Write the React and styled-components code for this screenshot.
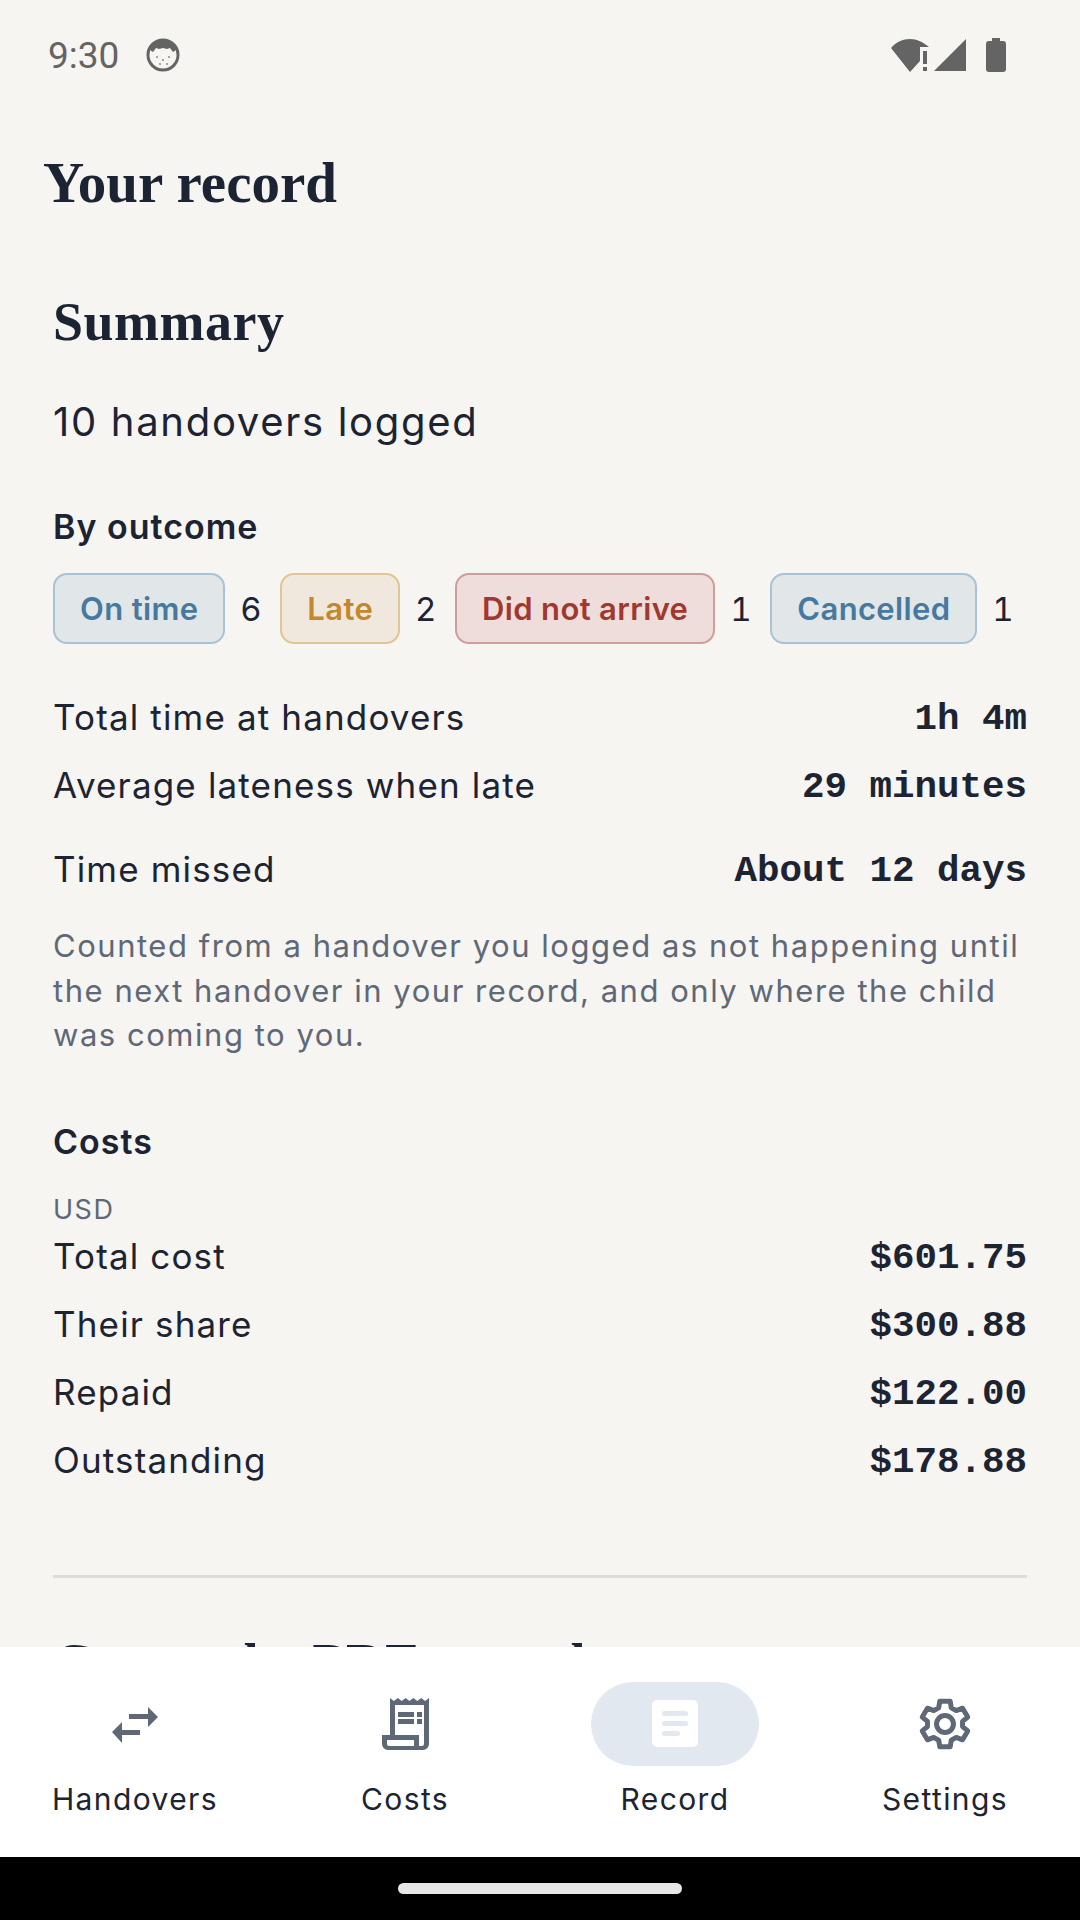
import React from 'react';
import styled, { createGlobalStyle } from 'styled-components';

const GlobalStyle = createGlobalStyle`
  html, body {
    margin: 0;
    padding: 0;
    background: #f6f5f1;
  }
`;

const sans = `"Inter", "Noto Sans", sans-serif`;
const serif = `"Liberation Serif", serif`;
const mono = `"Liberation Mono", monospace`;

const Screen = styled.div`
  width: 1080px;
  height: 1920px;
  display: flex;
  flex-direction: column;
  overflow: hidden;
  background: #f6f5f1;
  color: #1c2433;
  font-family: ${sans};
`;

const StatusBar = styled.div`
  height: 110px;
  flex: none;
  display: flex;
  align-items: center;
  justify-content: space-between;
  padding: 0 74px 0 48px;
  box-sizing: border-box;
  color: #646464;
`;

const StatusLeft = styled.div`
  display: flex;
  align-items: center;
  gap: 27px;
  font-family: Roboto, sans-serif;
  font-size: 37px;
`;

const StatusRight = styled.div`
  display: flex;
  align-items: center;
  gap: 5px;
`;

const BatterySlot = styled.div`
  display: flex;
  margin-left: 14px;
`;

const Content = styled.div`
  flex: 1;
  min-height: 0;
  overflow: hidden;
  padding: 40px 53px 0;
`;

const Title = styled.h1`
  margin: 0 0 0 -10px;
  font-family: ${serif};
  font-size: 57px;
  line-height: 66px;
  font-weight: 700;
`;

const Heading = styled.h2`
  margin: ${p => p.$top}px 0 0;
  font-family: ${serif};
  font-size: 54px;
  line-height: 62px;
  font-weight: 700;
  letter-spacing: 0.5px;
  white-space: nowrap;
`;

const Lead = styled.p`
  margin: 45px 0 0;
  font-size: 40px;
  line-height: 48px;
  letter-spacing: 1.7px;
`;

const SubHeading = styled.h3`
  margin: ${p => p.$top}px 0 0;
  font-size: 34px;
  line-height: 42px;
  font-weight: 600;
  letter-spacing: 1px;
`;

const Outcomes = styled.div`
  display: flex;
  align-items: center;
  margin-top: 25px;
  gap: 20px;
`;

const Outcome = styled.div`
  display: flex;
  align-items: center;
  gap: 15px;
`;

const Chip = styled.span`
  display: flex;
  align-items: center;
  height: 71px;
  box-sizing: border-box;
  padding: 0 25px;
  border-radius: 14px;
  border: 2px solid ${p => p.$border};
  background: ${p => p.$bg};
  color: ${p => p.$color};
  font-size: 31px;
  font-weight: 600;
  letter-spacing: 0.35px;
  white-space: nowrap;
`;

const Count = styled.span`
  width: 20px;
  font-size: 33px;
  font-variant-numeric: tabular-nums;
`;

const Rows = styled.div`
  margin-top: ${p => p.$top}px;
  display: flex;
  flex-direction: column;
`;

const Row = styled.div`
  display: flex;
  justify-content: space-between;
  align-items: center;
  height: ${p => p.$h || 68}px;
  font-size: 35px;
  letter-spacing: 1.15px;
`;

const Value = styled.span`
  padding-top: 4px;
  font-family: ${mono};
  font-weight: 700;
  font-size: 37.5px;
  letter-spacing: 0;
`;

const Note = styled.p`
  margin: 5px 0 0;
  font-size: 31px;
  line-height: 44.5px;
  letter-spacing: 1.53px;
  color: #5f6877;
`;

const Currency = styled.div`
  margin-top: 35px;
  font-size: 27px;
  line-height: 24px;
  letter-spacing: 1.5px;
  color: #5f6877;
`;

const Divider = styled.hr`
  margin: 81px 0 0;
  border: none;
  height: 3px;
  background: #dddcd5;
`;

const NavBar = styled.nav`
  flex: none;
  height: 210px;
  background: #fff;
  display: grid;
  grid-template-columns: repeat(4, 270px);
`;

const NavItem = styled.div`
  display: flex;
  flex-direction: column;
  align-items: center;
  padding-top: 35px;
`;

const IconPill = styled.div`
  width: 168px;
  height: 84px;
  border-radius: 42px;
  display: flex;
  align-items: center;
  justify-content: center;
  background: ${p => (p.$active ? '#e2e8ef' : 'transparent')};
`;

const NavLabel = styled.span`
  margin-top: 14px;
  font-size: 30px;
  line-height: 38px;
  letter-spacing: 1.4px;
`;

const GestureBar = styled.div`
  flex: none;
  height: 63px;
  background: #000;
  display: flex;
  align-items: center;
  justify-content: center;
`;

const HomePill = styled.div`
  width: 284px;
  height: 11px;
  border-radius: 6px;
  background: #e8e8e8;
`;

const FaceIcon = () => (
  <svg width="34" height="34" viewBox="0 0 34 34">
    <circle cx="17" cy="17" r="15" fill="#f6f5f1" stroke="#646464" strokeWidth="3" />
    <path d="M4 12C6 5 11 2 17 2s11 3 13 10l-3 2-3-4-3 1-4-1-4 1-3-1-3 4z" fill="#646464" />
    <g fill="#8a8a8a">
      <circle cx="11" cy="19" r="1" /><circle cx="17" cy="22" r="1" /><circle cx="23" cy="19" r="1" />
      <circle cx="14" cy="26" r="1" /><circle cx="21" cy="26" r="1" />
    </g>
  </svg>
);

const WifiIcon = () => (
  <svg width="38" height="34" viewBox="0 0 38 34">
    <path d="M0 10C5 4 12 1 19 1s13 3 19 8h-9v14l-10 11z" fill="#646464" />
    <rect x="32" y="13" width="4" height="13" fill="#646464" />
    <rect x="32" y="29" width="4" height="4" fill="#646464" />
  </svg>
);

const SignalIcon = () => (
  <svg width="33" height="34" viewBox="0 0 33 34">
    <path d="M0 33L32 1v32z" fill="#646464" />
  </svg>
);

const BatteryIcon = () => (
  <svg width="20" height="34" viewBox="0 0 20 34">
    <path d="M6 0h8v3h3a3 3 0 0 1 3 3v25a3 3 0 0 1-3 3H3a3 3 0 0 1-3-3V6a3 3 0 0 1 3-3h3z" fill="#646464" />
  </svg>
);

const SwapIcon = () => (
  <svg width="48" height="48" viewBox="0 0 48 48" fill="#5f6877">
    <path d="M18 14h19V7l10 10-10 10v-8H18z" />
    <path d="M1 32l10-10v8h18v5H11v8z" />
  </svg>
);

const ReceiptIcon = () => (
  <svg width="47" height="52" viewBox="0 0 47 52" fill="#5f6877" fillRule="evenodd">
    <path d="M8 0l3.9 3 3.9-3 3.9 3 3.9-3 3.9 3 3.9-3 3.9 3 3.9-3 3.9 3 3.9-3v46a6 6 0 0 1-6 6H6a6 6 0 0 1-6-6V37h8zM13 7v30h24v11h3a2 2 0 0 0 2-2V7z" />
    <path d="M5 42h27v6H7a2 2 0 0 1-2-2z" fill="#fff" />
    <path d="M16 14h16v5H16zM35 14h5v5h-5zM16 21h16v5H16zM35 21h5v5h-5z" />
  </svg>
);

const RecordIcon = () => (
  <svg width="48" height="48" viewBox="0 0 48 48">
    <rect x="1" y="0" width="46" height="47" rx="5" fill="#fff" />
    <rect x="11" y="11" width="26" height="5" rx="2.5" fill="#e2e8ef" />
    <rect x="11" y="21" width="26" height="5" rx="2.5" fill="#e2e8ef" />
    <rect x="11" y="31" width="18" height="5" rx="2.5" fill="#e2e8ef" />
  </svg>
);

const GearIcon = () => (
  <svg width="52" height="54" viewBox="0 0 24 24" fill="none" stroke="#5f6877" strokeWidth="2.3" strokeLinejoin="round">
    <path d="M9.6 1.5h4.8l.5 3 2.3 1.3 2.9-1.1 2.4 4.1-2.4 2v2.4l2.4 2-2.4 4.1-2.9-1.1-2.3 1.3-.5 3H9.6l-.5-3-2.3-1.3-2.9 1.1-2.4-4.1 2.4-2v-2.4l-2.4-2 2.4-4.1 2.9 1.1 2.3-1.3z" />
    <circle cx="12" cy="12" r="3.9" />
  </svg>
);

const outcomes = [
  { label: 'On time', count: 6, color: '#47799f', bg: '#e1e6e9', border: '#a9c2d4' },
  { label: 'Late', count: 2, color: '#c4872b', bg: '#f0e8dc', border: '#e0c595' },
  { label: 'Did not arrive', count: 1, color: '#a23730', bg: '#eeddda', border: '#cf9e9a' },
  { label: 'Cancelled', count: 1, color: '#47799f', bg: '#e1e6e9', border: '#a9c2d4' },
];

const costs = [
  ['Total cost', '$601.75'],
  ['Their share', '$300.88'],
  ['Repaid', '$122.00'],
  ['Outstanding', '$178.88'],
];

const tabs = [
  { label: 'Handovers', icon: <SwapIcon /> },
  { label: 'Costs', icon: <ReceiptIcon /> },
  { label: 'Record', icon: <RecordIcon />, active: true },
  { label: 'Settings', icon: <GearIcon /> },
];

export default function App() {
  return (
    <Screen>
      <GlobalStyle />
      <StatusBar>
        <StatusLeft>
          <span>9:30</span>
          <FaceIcon />
        </StatusLeft>
        <StatusRight>
          <WifiIcon />
          <SignalIcon />
          <BatterySlot>
            <BatteryIcon />
          </BatterySlot>
        </StatusRight>
      </StatusBar>
      <Content>
        <Title>Your record</Title>
        <Heading $top={75}>Summary</Heading>
        <Lead>10 handovers logged</Lead>
        <SubHeading $top={60}>By outcome</SubHeading>
        <Outcomes>
          {outcomes.map(o => (
            <Outcome key={o.label}>
              <Chip $color={o.color} $bg={o.bg} $border={o.border}>{o.label}</Chip>
              <Count>{o.count}</Count>
            </Outcome>
          ))}
        </Outcomes>
        <Rows $top={39}>
          <Row><span>Total time at handovers</span><Value>1h 4m</Value></Row>
          <Row><span>Average lateness when late</span><Value>29 minutes</Value></Row>
          <Row $h={100}><span>Time missed</span><Value>About 12 days</Value></Row>
        </Rows>
        <Note>
          Counted from a handover you logged as not happening until the next handover in your record, and only where the child was coming to you.
        </Note>
        <SubHeading $top={63}>Costs</SubHeading>
        <Currency>USD</Currency>
        <Rows $top={0}>
          {costs.map(([label, value]) => (
            <Row key={label}><span>{label}</span><Value>{value}</Value></Row>
          ))}
        </Rows>
        <Divider />
        <Heading $top={54}>Create the PDF record</Heading>
      </Content>
      <NavBar>
        {tabs.map(t => (
          <NavItem key={t.label}>
            <IconPill $active={t.active}>{t.icon}</IconPill>
            <NavLabel>{t.label}</NavLabel>
          </NavItem>
        ))}
      </NavBar>
      <GestureBar>
        <HomePill />
      </GestureBar>
    </Screen>
  );
}
